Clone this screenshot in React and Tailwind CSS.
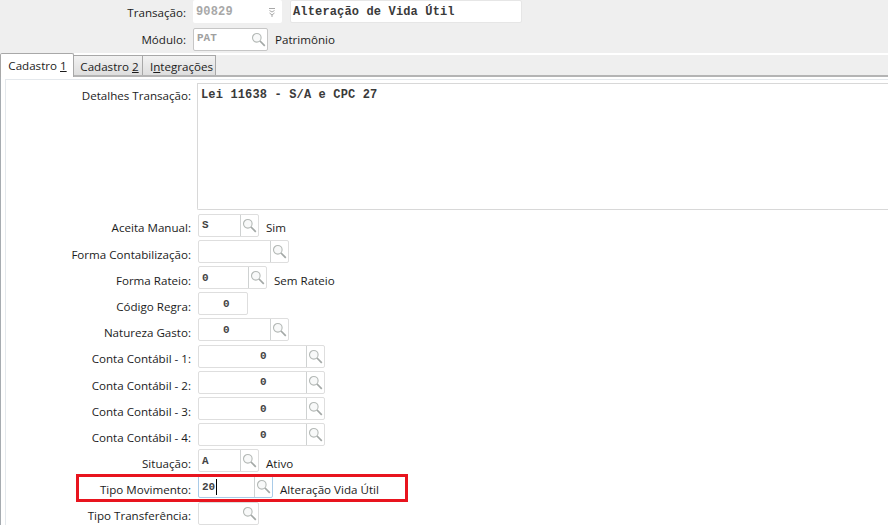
const mono = "font-['Liberation_Mono',monospace] text-[12px] font-bold tracking-[0.15px]";
const fieldValue = "font-['Liberation_Mono',monospace] text-[11px] font-bold";
const labelText = 'text-[11.6px] text-[#1c1c1c]';

function SearchIcon() {
  return (
    <svg width="15" height="15" viewBox="0 0 15 15" fill="none" className="shrink-0">
      <circle cx="5.8" cy="5.8" r="4.3" stroke="#b4b9b6" strokeWidth="1.1" fill="#f8f9f9" />
      <path d="M9 9l4.8 4.8" stroke="#a3a8a6" strokeWidth="1.7" />
    </svg>
  );
}

function Spinner() {
  return (
    <svg width="8" height="10" viewBox="0 0 8 10" fill="none" className="shrink-0">
      <path d="M1 1.5h6M1.5 3.5L4 5l2.5-1.5M1.5 6L4 8l2.5-2M3 9h2" stroke="#a8a8a8" strokeWidth="1" />
    </svg>
  );
}

// campo com lupa
function Lookup({ value = '', width, indent = 'pl-[3px]', focused, divider = true, border = 'border-[#dedede]', color = 'text-[#444]', shift = 'pt-[1px]' }) {
  return (
    <div
      className={`flex h-[23px] shrink-0 items-center rounded-[2px] border bg-white ${focused ? 'border-[#a9cbe8]' : border}`}
      style={{ width }}
    >
      <div className={`flex h-full min-w-0 flex-1 items-center ${shift} ${fieldValue} ${indent} ${color}`}>
        {value}
        {focused && <span className="ml-[1px] h-[16px] w-[1px] bg-black" />}
      </div>
      <div className={`flex h-full w-[18px] items-center justify-center ${divider ? 'border-l border-[#cfd2d2]' : ''}`}>
        <SearchIcon />
      </div>
    </div>
  );
}

function Row({ label, children, desc }) {
  return (
    <div className="flex h-[26.2px] items-center">
      <div className={`w-[185px] shrink-0 pt-[6px] text-right ${labelText}`}>{label}</div>
      <div className="ml-[7px] flex items-center gap-[7px]">
        {children}
        {desc && <span className={`pt-[6px] ${labelText}`}>{desc}</span>}
      </div>
    </div>
  );
}

export default function App() {
  const contas = ['1', '2', '3', '4'];

  return (
    <div className="flex h-[525px] w-[888px] flex-col overflow-hidden bg-[#efefef] font-['Open_Sans',sans-serif]">
      <div className="flex h-[55px] shrink-0 flex-col border-b-2 border-b-white">
        <div className="flex h-[23px] items-center">
          <div className={`w-[186px] pt-[3px] text-right ${labelText}`}>Transação:</div>
          <div className={`ml-[7px] flex h-[23px] w-[89px] items-center justify-between rounded-[2px] bg-white pl-[3px] pr-[6px] text-[#a8a8a8] ${mono}`}>
            90829
            <Spinner />
          </div>
          <div className={`ml-[8px] flex h-[23px] w-[232px] items-center rounded-[2px] border border-[#e6e6e6] bg-white pl-[2px] text-[#3a3a3a] ${mono}`}>
            Alteração de Vida Útil
          </div>
        </div>
        <div className="mt-[5px] flex h-[23px] items-center">
          <div className={`w-[186px] pt-[1px] text-right ${labelText}`}>Módulo:</div>
          <div className="ml-[7px] flex items-center gap-[7px]">
            <Lookup value="PAT" width={75} divider={false} border="border-[#c6c6c6]" color="text-[#a0a0a0]" shift="pb-[2px]" />
            <span className={`pt-[1px] ${labelText}`}>Patrimônio</span>
          </div>
        </div>
      </div>

      <div className={`flex h-[22px] shrink-0 items-end border-b-2 border-[#b4b4b4] ${labelText}`}>
        <div className="relative -mb-[2px] flex h-[24px] w-[74px] items-start justify-center rounded-t-[2px] border-x border-t border-[#a8a8a8] bg-white pl-[1px] pt-[3px]">
          Cadastro&nbsp;<span className="underline">1</span>
        </div>
        <div className="flex h-[20px] w-[69px] items-center justify-center border-r border-t border-[#a8a8a8] bg-gradient-to-b from-[#f2f2f2] to-[#dedede] pl-[3px] pt-[2px]">
          Cadastro&nbsp;<span className="underline">2</span>
        </div>
        <div className="flex h-[20px] w-[73px] items-center justify-center border-r border-t border-[#a8a8a8] bg-gradient-to-b from-[#f2f2f2] to-[#dedede] pl-[5px] pt-[2px]">
          I<span className="underline">n</span>tegrações
        </div>
      </div>

      <div className="flex flex-1 overflow-hidden border-l border-[#a6abb0] bg-white pl-[4px] pt-[2px]">
        <div className="flex flex-1 flex-col border-l border-t border-[#e4e8ec]">
          <div className="flex pt-[3px]">
            <div className={`w-[185px] shrink-0 pt-[4px] text-right ${labelText}`}>Detalhes Transação:</div>
            <div className={`ml-[6px] h-[127px] flex-1 rounded-bl-[2px] border-y border-l border-[#d8d8d8] pl-[3px] pt-[2px] text-[#3a3a3a] ${mono}`}>
              Lei 11638 - S/A e CPC 27
            </div>
          </div>

          <div className="flex flex-col pt-[2px]">
            <Row label="Aceita Manual:" desc="Sim">
              <Lookup value="S" width={61} />
            </Row>
            <Row label="Forma Contabilização:">
              <Lookup width={91} />
            </Row>
            <Row label="Forma Rateio:" desc="Sem Rateio">
              <Lookup value="0" width={69} />
            </Row>
            <Row label="Código Regra:">
              <div className={`flex h-[23px] w-[50px] items-center rounded-[2px] border border-[#dedede] bg-white pl-[24px] pt-[1px] text-[#444] ${fieldValue}`}>0</div>
            </Row>
            <Row label="Natureza Gasto:">
              <Lookup value="0" width={91} indent="pl-[24px]" />
            </Row>
            {contas.map((n) => (
              <Row key={n} label={`Conta Contábil - ${n}:`}>
                <Lookup value="0" width={127} indent="pl-[61px]" />
              </Row>
            ))}
            <Row label="Situação:" desc="Ativo">
              <Lookup value="A" width={61} />
            </Row>
            <div className="relative">
              <div className="absolute left-[70px] top-0 h-[28px] w-[332px] border-[3px] border-[#e8141e]" />
              <Row label="Tipo Movimento:" desc="Alteração Vida Útil">
                <Lookup value="20" width={75} focused />
              </Row>
            </div>
            <Row label="Tipo Transferência:">
              <Lookup width={61} divider={false} />
            </Row>
          </div>
        </div>
      </div>
    </div>
  );
}
